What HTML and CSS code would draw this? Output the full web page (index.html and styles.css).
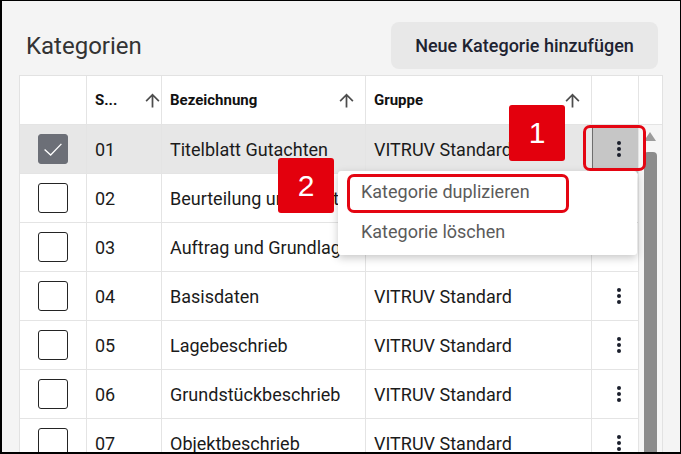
FILE: index.html
```html
<!DOCTYPE html>
<html>
<head>
    <title>Kategorien</title>
    <link rel="stylesheet" href="styles.css">
</head>
<body>
    <div class="frame">
        <div class="page">
            <div class="page-header">
                <h1 class="title">Kategorien</h1>
                <button class="add-btn">Neue Kategorie hinzufügen</button>
            </div>

            <div class="grid">
                <div class="hcell"></div>
                <div class="hcell hcell-tight">
                    <span>S...</span>
                    <svg class="sort" viewBox="0 0 24 24"><path d="M4 12l1.41 1.41L11 7.83V20h2V7.83l5.58 5.59L20 12l-8-8-8 8z"/></svg>
                </div>
                <div class="hcell">
                    <span>Bezeichnung</span>
                    <svg class="sort" viewBox="0 0 24 24"><path d="M4 12l1.41 1.41L11 7.83V20h2V7.83l5.58 5.59L20 12l-8-8-8 8z"/></svg>
                </div>
                <div class="hcell">
                    <span>Gruppe</span>
                    <svg class="sort" viewBox="0 0 24 24"><path d="M4 12l1.41 1.41L11 7.83V20h2V7.83l5.58 5.59L20 12l-8-8-8 8z"/></svg>
                </div>
                <div class="hcell"></div>
                <div class="hcell hcell-last"></div>

                <div class="scrollbar">
                    <div class="scroll-up"></div>
                    <div class="scroll-thumb"></div>
                </div>

                <div class="row selected">
                    <div class="cell cell-check">
                        <span class="checkbox checked">
                            <svg viewBox="0 0 30 30"><polyline points="6,15.5 12.5,21.5 24,9.5"/></svg>
                        </span>
                    </div>
                    <div class="cell">01</div>
                    <div class="cell">Titelblatt Gutachten</div>
                    <div class="cell">VITRUV Standard</div>
                    <div class="cell cell-menu active"><span class="kebab"><i></i><i></i><i></i></span></div>
                </div>
                <div class="row">
                    <div class="cell cell-check"><span class="checkbox"></span></div>
                    <div class="cell">02</div>
                    <div class="cell">Beurteilung und Fazit</div>
                    <div class="cell">VITRUV Standard</div>
                    <div class="cell cell-menu"><span class="kebab"><i></i><i></i><i></i></span></div>
                </div>
                <div class="row">
                    <div class="cell cell-check"><span class="checkbox"></span></div>
                    <div class="cell">03</div>
                    <div class="cell">Auftrag und Grundlagen</div>
                    <div class="cell">VITRUV Standard</div>
                    <div class="cell cell-menu"><span class="kebab"><i></i><i></i><i></i></span></div>
                </div>
                <div class="row">
                    <div class="cell cell-check"><span class="checkbox"></span></div>
                    <div class="cell">04</div>
                    <div class="cell">Basisdaten</div>
                    <div class="cell">VITRUV Standard</div>
                    <div class="cell cell-menu"><span class="kebab"><i></i><i></i><i></i></span></div>
                </div>
                <div class="row">
                    <div class="cell cell-check"><span class="checkbox"></span></div>
                    <div class="cell">05</div>
                    <div class="cell">Lagebeschrieb</div>
                    <div class="cell">VITRUV Standard</div>
                    <div class="cell cell-menu"><span class="kebab"><i></i><i></i><i></i></span></div>
                </div>
                <div class="row">
                    <div class="cell cell-check"><span class="checkbox"></span></div>
                    <div class="cell">06</div>
                    <div class="cell">Grundstückbeschrieb</div>
                    <div class="cell">VITRUV Standard</div>
                    <div class="cell cell-menu"><span class="kebab"><i></i><i></i><i></i></span></div>
                </div>
                <div class="row">
                    <div class="cell cell-check"><span class="checkbox"></span></div>
                    <div class="cell">07</div>
                    <div class="cell">Objektbeschrieb</div>
                    <div class="cell">VITRUV Standard</div>
                    <div class="cell cell-menu"><span class="kebab"><i></i><i></i><i></i></span></div>
                </div>
            </div>
        </div>

        <!-- context menu + annotations -->
        <div class="menu">
            <div class="menu-item">Kategorie duplizieren</div>
            <div class="menu-item">Kategorie löschen</div>
            <div class="mark mark-item"></div>
        </div>
        <div class="mark mark-kebab"></div>
        <div class="callout callout-1">1</div>
        <div class="callout callout-2">2</div>
    </div>
</body>
</html>
```

FILE: styles.css
```css
* { box-sizing: border-box; }
body { margin: 0; font-family: Roboto, "Liberation Sans", sans-serif; }

.frame {
    position: relative;
    width: 681px;
    height: 454px;
    overflow: hidden;
    background: #f4f4f4;
    border: 1px solid #000;
    border-left-width: 2px;
    border-bottom-width: 2px;
}
.page { padding: 21px 16px 0 17px; }

.page-header {
    display: flex;
    align-items: center;
    justify-content: space-between;
    margin-bottom: 6px;
}
.title {
    margin: 0 0 0 7px;
    font-size: 24px;
    font-weight: 400;
    color: #333;
}
.add-btn {
    height: 47px;
    width: 267px;
    margin-right: 6px;
    border: none;
    border-radius: 8px;
    background: #e8e8e8;
    color: #1e2331;
    font-family: Roboto, sans-serif;
    font-size: 18px;
    font-weight: 500;
}

.grid {
    display: grid;
    grid-template-columns: 67px 75px 204px 226px 47px 1fr;
    grid-auto-rows: 49px;
    width: 644px;
    background: #fff;
    border: 1px solid #e2e2e2;
    border-bottom: none;
}
.row { display: contents; }

.hcell, .cell {
    display: flex;
    align-items: center;
    padding: 0 8px;
    border-right: 1px solid #e4e4e4;
    border-bottom: 1px solid #e4e4e4;
    white-space: nowrap;
    overflow: hidden;
}
.hcell {
    justify-content: space-between;
    font-size: 15px;
    font-weight: 700;
    color: #111;
}
.hcell-tight { padding-right: 0; }
.hcell-tight .sort { margin-right: -2px; }
.hcell-last { border-right: none; }
.sort { width: 21px; height: 21px; fill: #4d4d4d; flex-shrink: 0; }

.cell { font-size: 18px; color: #1b1b1b; }
.selected .cell { background: #e7e7e7; }
.selected .cell-menu.active { background: #c6c6c6; box-shadow: inset 1px 0 #6e6e6e; }

.cell-check { justify-content: center; padding: 0; }
.checkbox {
    display: block;
    width: 30px;
    height: 30px;
    border: 1px solid #242424;
    border-radius: 3px;
}
.checkbox.checked { background: #6c6f77; border-color: #6c6f77; }
.checkbox svg { display: block; width: 28px; height: 28px; margin: 0; }
.checkbox polyline { fill: none; stroke: #fff; stroke-width: 1.4; }

.cell-menu { justify-content: center; padding: 0 0 0 7px; }
.kebab { display: flex; flex-direction: column; gap: 2px; }
.kebab i { display: block; width: 4px; height: 4px; border-radius: 50%; background: #1b1f2c; }

.scrollbar {
    grid-column: 6;
    grid-row: 2 / span 7;
    background: #f6f6f6;
    padding: 7px 0 0 5px;
}
.scroll-up {
    width: 0;
    height: 0;
    border-left: 6.5px solid transparent;
    border-right: 6.5px solid transparent;
    border-bottom: 9px solid #9c9c9c;
}
.scroll-thumb {
    width: 13px;
    height: 400px;
    margin-top: 11px;
    background: #8c8c8c;
    border-radius: 4px 4px 0 0;
}

.menu {
    position: absolute;
    left: 336px;
    top: 170px;
    width: 299px;
    padding-bottom: 4px;
    background: #fff;
    border-radius: 3px;
    box-shadow: 0 3px 8px rgba(0, 0, 0, 0.22);
}
.menu-item {
    height: 40px;
    display: flex;
    align-items: center;
    padding-left: 23px;
    font-size: 18px;
    color: #5b5b5b;
}

.mark {
    position: absolute;
    border: 3px solid #e40512;
    border-radius: 7px;
}
.mark-item { left: 9px; top: 3px; width: 222px; height: 39px; }
.mark-kebab { left: 581px; top: 124px; width: 63px; height: 46px; }

.callout {
    position: absolute;
    display: flex;
    align-items: center;
    justify-content: center;
    width: 56px;
    height: 56px;
    background: #e3000d;
    border-radius: 3px;
    color: #fff;
    font-family: "Liberation Sans", Arial, sans-serif;
    font-size: 30px;
}
.callout-1 { left: 507px; top: 104px; }
.callout-2 { left: 276px; top: 157px; height: 55px; }
```
